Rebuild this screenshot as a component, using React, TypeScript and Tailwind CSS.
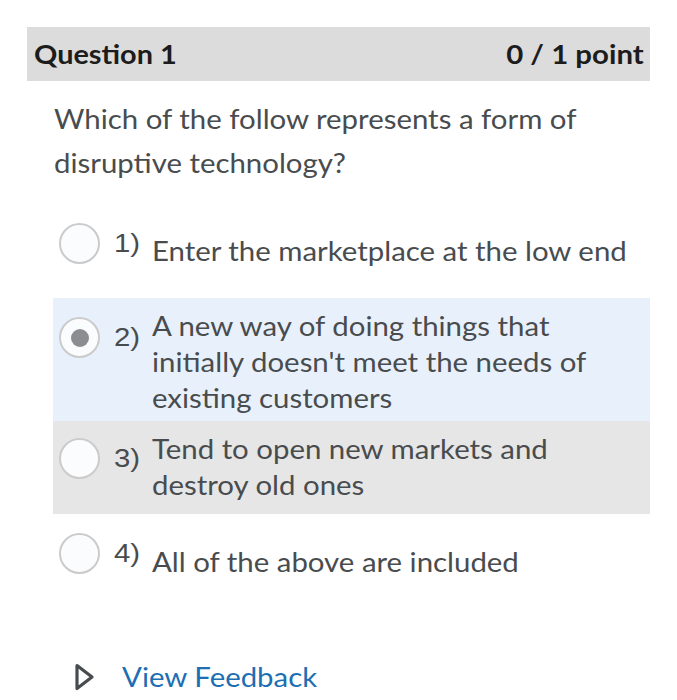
import React from "react";

interface Opcao {
  numero: string;
  linhas: string[];
  fundo: string;
  altura: string;
  topoRadio: string;
  selecionada?: boolean;
}

const opcoes: Opcao[] = [
  {
    numero: "1)",
    linhas: ["Enter the marketplace at the low end"],
    fundo: "bg-white",
    altura: "h-[75px]",
    topoRadio: "mt-0",
  },
  {
    numero: "2)",
    linhas: [
      "A new way of doing things that",
      "initially doesn't meet the needs of",
      "existing customers",
    ],
    fundo: "bg-[#e8f1fb]",
    altura: "h-[123px]",
    topoRadio: "mt-[19px]",
    selecionada: true,
  },
  {
    numero: "3)",
    linhas: ["Tend to open new markets and", "destroy old ones"],
    fundo: "bg-[#e6e6e6]",
    altura: "h-[93px]",
    topoRadio: "mt-[17px]",
  },
];

// the captured page is rendered slightly wide, so text is stretched horizontally
const largo = "origin-left scale-x-[1.13]";

function Radio({ selecionada }: { selecionada?: boolean }) {
  return (
    <span className="flex h-[41px] w-[41px] shrink-0 items-center justify-center rounded-full border-2 border-[#cbcbcb] bg-[#fbfcfd]">
      {selecionada && (
        <span className="h-[18px] w-[18px] rounded-full bg-[#8b8d90]" />
      )}
    </span>
  );
}

function LinhaOpcao({ opcao }: { opcao: Opcao }) {
  return (
    <div className={`flex items-start ${opcao.fundo} ${opcao.altura}`}>
      <div
        className={`flex w-[99px] shrink-0 items-center pl-[6px] ${opcao.topoRadio}`}
      >
        <Radio selecionada={opcao.selecionada} />
        <span
          className={`ml-[14px] inline-block font-['Liberation_Sans',Arial,sans-serif] text-[26px] leading-[41px] text-[#494c4e] ${largo}`}
        >
          {opcao.numero}
        </span>
      </div>
      <div className="pt-[10px] text-[26px] leading-[36px] text-[#494c4e]">
        {opcao.linhas.map((linha) => (
          <span key={linha} className={`block whitespace-nowrap ${largo}`}>
            {linha}
          </span>
        ))}
      </div>
    </div>
  );
}

export default function App() {
  return (
    <div className="h-[700px] w-[677px] overflow-hidden bg-white px-[27px] pt-[27px] font-['Lato','Open_Sans',sans-serif]">
      <div className="flex h-[54px] items-center justify-between bg-[#dcdcdc] pr-[6px] pl-[7px] text-[26px] font-bold text-[#1c1c1c]">
        <span className="inline-block origin-left scale-x-[1.11]">
          Question 1
        </span>
        <span className="inline-block origin-right scale-x-[1.13]">
          0 / 1 point
        </span>
      </div>

      <p className="mt-[16px] pl-[27px] text-[26px] leading-[44px] text-[#494c4e]">
        <span className={`block whitespace-nowrap ${largo}`}>
          Which of the follow represents a form of
        </span>
        <span className={`block whitespace-nowrap ${largo}`}>
          disruptive technology?
        </span>
      </p>

      <div className="mt-[38px] ml-[26px]">
        {opcoes.map((opcao) => (
          <LinhaOpcao key={opcao.numero} opcao={opcao} />
        ))}
        <div className="mt-[20px]">
          <LinhaOpcao
            opcao={{
              numero: "4)",
              linhas: ["All of the above are included"],
              fundo: "bg-white",
              altura: "h-[56px]",
              topoRadio: "-mt-px",
            }}
          />
        </div>
      </div>

      <div className="mt-[69px] flex h-[36px] items-center pl-[47px]">
        <svg width="21" height="28" viewBox="0 0 21 28" className="shrink-0">
          <polygon
            points="3,2.5 18,14 3,25.5"
            fill="none"
            stroke="#494c4e"
            strokeWidth="3.2"
            strokeLinejoin="round"
          />
        </svg>
        <span
          className={`ml-[27px] inline-block text-[26px] leading-[36px] text-[#1d6fb3] ${largo}`}
        >
          View Feedback
        </span>
      </div>
    </div>
  );
}
